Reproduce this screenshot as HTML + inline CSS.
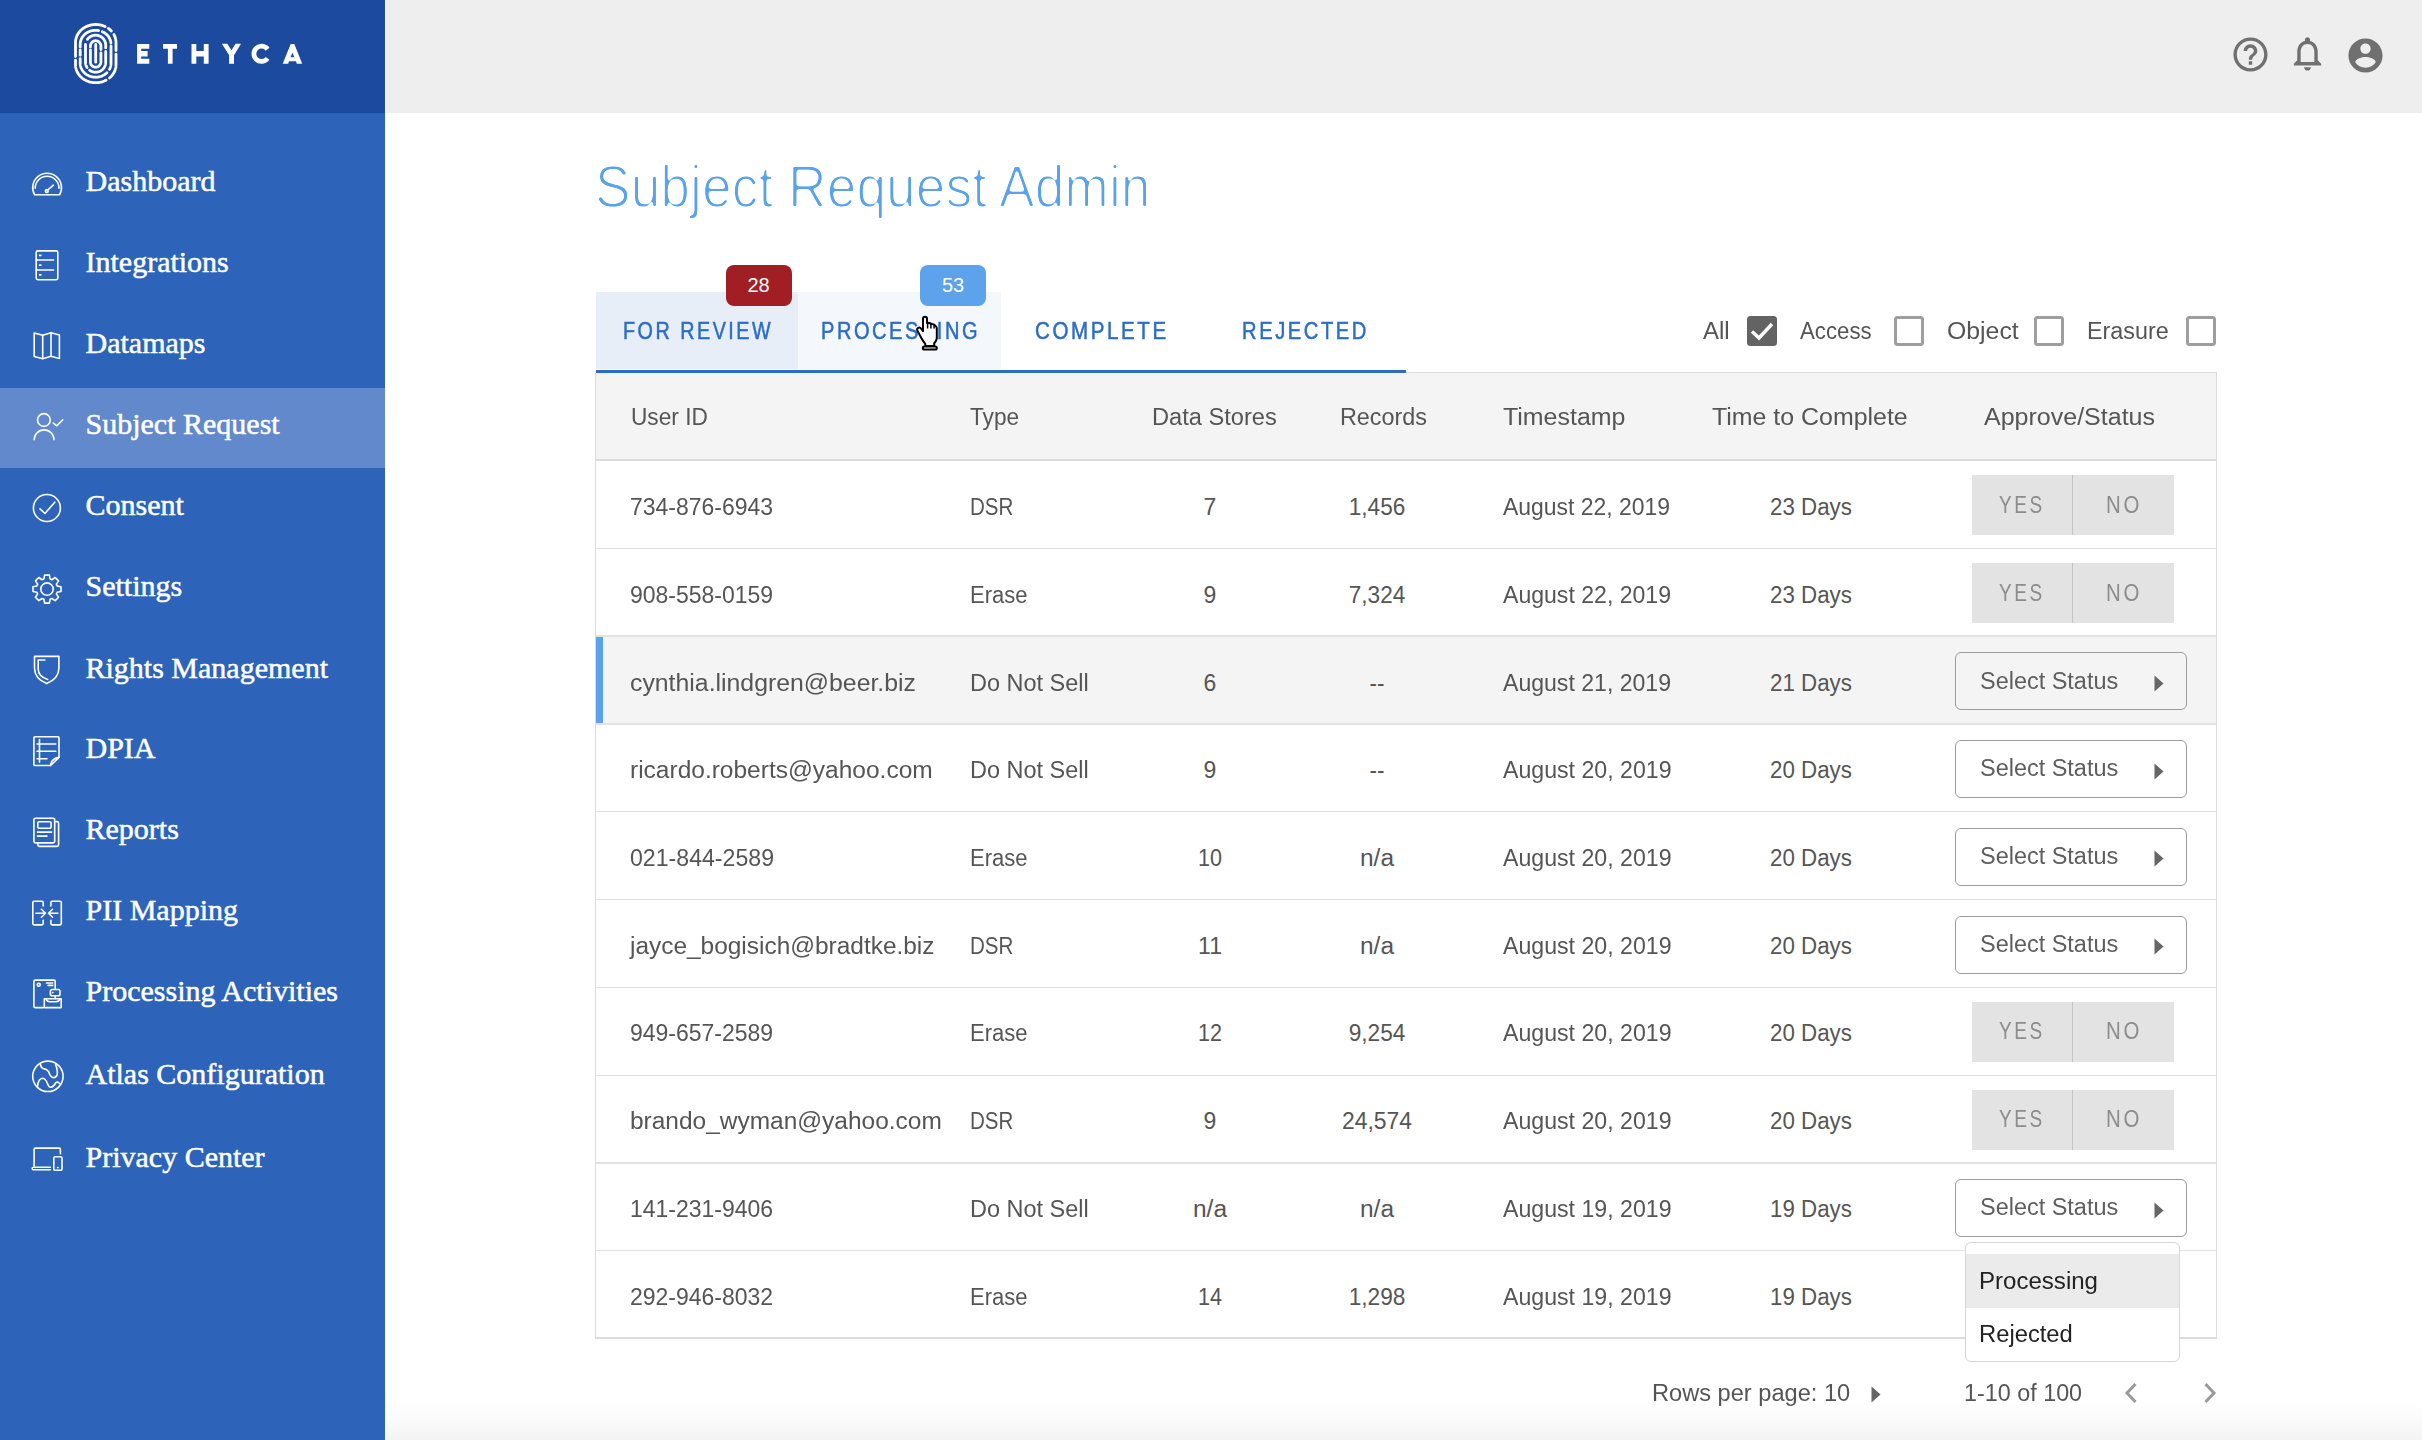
<!DOCTYPE html><html><head><meta charset="utf-8"><style>
*{margin:0;padding:0;box-sizing:border-box}
html,body{width:2422px;height:1440px;overflow:hidden;background:#fff;font-family:"Liberation Sans", sans-serif}
.t{position:absolute;white-space:nowrap;line-height:1;transform-origin:0 50%}
</style></head><body><svg width="0" height="0" style="position:absolute"><filter id="thin" x="-5%" y="-20%" width="110%" height="140%"><feGaussianBlur stdDeviation="1.1"/><feComponentTransfer><feFuncA type="linear" slope="5" intercept="-3.4"/></feComponentTransfer></filter></svg>
<div style="position:absolute;left:0;top:0;width:385px;height:1440px;background:#2D64BA"></div>
<div style="position:absolute;left:0;top:0;width:385px;height:113px;background:#1C4A9F"></div>
<div style="position:absolute;left:0;top:388px;width:385px;height:79.5px;background:#6189CC"></div>
<div style="position:absolute;left:386px;top:0;width:2036px;height:113px;background:#EEEEEE"></div>
<div style="position:absolute;left:386px;top:1398px;width:2036px;height:42px;background:linear-gradient(#fff,#FBFBFB 50%,#F3F3F3)"></div>
<svg style="position:absolute;left:0;top:0" width="130" height="95" viewBox="0 0 130 95" fill="none" stroke="#fff" stroke-width="2.8" stroke-linecap="round"><path d="M75.50 56.49 L75.50 55.60 L75.50 54.71 L75.50 53.82 L75.50 52.93 L75.50 52.05 L75.50 51.16 L75.50 50.27 L75.50 49.38 L75.50 48.49 L75.50 47.61 L75.50 46.72 L75.50 45.83 L75.50 44.94 L75.50 44.05 L75.50 43.17 L75.50 42.31 L75.53 41.56 L75.59 40.81 L75.69 40.06 L75.82 39.31 L75.99 38.57 L76.19 37.84 L76.43 37.12 L76.70 36.40 L77.00 35.70 L77.34 35.01 L77.71 34.33 L78.11 33.66 L78.54 33.01 L79.00 32.38 L79.49 31.77 L80.01 31.17 L80.56 30.60 L81.13 30.04 L81.73 29.51 L82.36 29.00 L83.01 28.51 L83.68 28.05 L84.37 27.61 L85.08 27.20 L85.81 26.82 L86.56 26.46 L87.32 26.13 L88.10 25.83 L88.89 25.56 L89.69 25.32 L90.51 25.11 L91.33 24.93 L92.16 24.78 L93.00 24.67 L93.84 24.58 L94.69 24.52 L95.54 24.50 L96.39 24.51 L97.23 24.55 L98.08 24.62 L98.92 24.72 L99.75 24.86 L100.58 25.02 L101.40 25.21 L102.21 25.44 L103.01 25.70 L103.79 25.98 L104.56 26.29 L105.13 26.55"/><path d="M108.33 28.39 L108.98 28.87 L109.61 29.38 L110.22 29.91 L110.80 30.46 L111.35 31.03 L111.35 31.03"/><path d="M113.89 34.50 L114.25 35.18 L114.58 35.87 L114.87 36.58 L115.14 37.30 L115.36 38.02 L115.56 38.76 L115.72 39.50 L115.84 40.24 L115.93 40.99 L115.98 41.75 L116.00 42.50 L116.00 43.39 L116.00 44.28 L116.00 45.16 L116.00 46.05 L116.00 46.94 L116.00 47.83 L116.00 48.72 L116.00 49.60 L116.00 50.49 L116.00 50.49"/><path d="M116.00 54.04 L116.00 54.93 L116.00 55.82 L116.00 56.71 L116.00 57.60 L116.00 58.48 L116.00 59.37 L116.00 60.26 L116.00 61.15 L116.00 62.04 L116.00 62.92 L116.00 63.81 L116.00 64.70 L115.98 65.45 L115.93 66.21 L115.84 66.96 L115.72 67.70 L115.56 68.44 L115.36 69.18 L115.14 69.90 L114.87 70.62 L114.58 71.33 L114.25 72.02 L113.89 72.70 L113.50 73.37 L113.07 74.02 L112.62 74.66 L112.13 75.28 L111.62 75.88 L111.08 76.46 L110.51 77.02 L109.92 77.56 L109.46 77.95"/><path d="M75.50 60.26 L75.50 61.15 L75.50 62.04 L75.50 62.92 L75.50 63.81 L75.50 64.70 L75.52 65.45 L75.57 66.21 L75.66 66.96 L75.78 67.70 L75.94 68.44 L76.14 69.18 L76.36 69.90 L76.63 70.62 L76.92 71.33 L77.25 72.02 L77.61 72.70 L78.00 73.37 L78.43 74.02 L78.88 74.66 L79.37 75.28 L79.88 75.88 L80.42 76.46 L80.99 77.02 L81.58 77.56 L82.20 78.08 L82.84 78.57 L83.51 79.04 L84.19 79.48 L84.90 79.90 L85.62 80.29 L86.37 80.65 L87.13 80.99 L87.90 81.29 L88.69 81.57 L89.49 81.82 L90.30 82.04 L91.13 82.22 L91.96 82.38 L92.79 82.51 L93.63 82.60 L94.48 82.66 L95.33 82.70 L96.17 82.70 L97.02 82.66 L97.87 82.60 L98.71 82.51 L99.54 82.38 L100.37 82.22 L101.20 82.04 L102.01 81.82 L102.81 81.57 L103.60 81.29 L104.37 80.99 L105.13 80.65 L105.88 80.29 L106.06 80.19"/><path d="M80.20 46.95 L80.20 46.19 L80.20 45.43 L80.20 44.68 L80.20 44.01 L80.23 43.42 L80.28 42.84 L80.37 42.25 L80.47 41.68 L80.61 41.10 L80.77 40.54 L80.95 39.97 L81.17 39.42 L81.40 38.87 L81.67 38.34 L81.95 37.81 L82.26 37.30 L82.60 36.80 L82.95 36.31 L83.33 35.84 L83.73 35.38 L84.16 34.93 L84.60 34.50 L85.06 34.09 L85.54 33.70 L86.03 33.33 L86.55 32.97 L87.08 32.64 L87.62 32.32 L88.18 32.03 L88.75 31.76 L89.34 31.51 L89.93 31.28 L90.54 31.08 L91.15 30.90 L91.77 30.74 L92.40 30.61 L93.03 30.50 L93.67 30.41 L94.31 30.35 L94.96 30.31 L95.60 30.30 L96.24 30.31 L96.89 30.35 L97.53 30.41 L98.17 30.50 L98.64 30.58"/><path d="M102.30 31.70 L102.88 31.96 L103.44 32.25 L103.99 32.56 L104.52 32.89 L105.04 33.24 L105.54 33.61 L106.02 33.99 L106.49 34.40 L106.94 34.82 L107.36 35.26 L107.77 35.72 L108.15 36.19 L108.52 36.68 L108.86 37.17 L109.17 37.68 L109.46 38.21 L109.73 38.74 L109.98 39.28 L110.20 39.83 L110.39 40.39 L110.56 40.96 L110.70 41.53 L110.81 42.11 L110.90 42.69 L110.93 42.98"/><path d="M111.00 45.81 L111.00 46.57 L111.00 47.32 L111.00 48.08 L111.00 48.84 L111.00 49.59 L111.00 50.35 L111.00 51.10 L111.00 51.86 L111.00 52.62 L111.00 53.37 L111.00 54.13 L111.00 54.88 L111.00 55.64 L111.00 56.40 L111.00 57.15 L111.00 57.91 L111.00 58.66 L111.00 59.42 L111.00 60.18 L111.00 60.93 L111.00 61.69 L111.00 62.44 L111.00 63.20 L110.99 63.79 L110.95 64.37 L110.88 64.95 L110.78 65.53 L110.66 66.11 L110.52 66.68 L110.34 67.25 L110.14 67.80 L109.92 68.35 L109.67 68.89 L109.46 69.29"/><path d="M80.20 49.78 L80.20 50.54 L80.20 51.29 L80.20 52.05 L80.20 52.81 L80.20 53.56 L80.20 54.32 L80.20 55.07 L80.20 55.26"/><path d="M80.20 58.66 L80.20 59.42 L80.20 60.18 L80.20 60.93 L80.20 61.69 L80.20 62.44 L80.20 63.20 L80.21 63.79 L80.25 64.37 L80.32 64.95 L80.42 65.53 L80.54 66.11 L80.68 66.68 L80.86 67.25 L81.06 67.80 L81.28 68.35 L81.53 68.89 L81.81 69.42 L82.10 69.94 L82.43 70.45 L82.77 70.95 L83.14 71.43 L83.53 71.90 L83.94 72.35 L84.37 72.78 L84.83 73.20 L85.30 73.60 L85.78 73.99 L86.29 74.35 L86.81 74.70 L87.35 75.02 L87.90 75.32 L88.47 75.61 L89.04 75.87 L89.63 76.11 L90.23 76.32 L90.84 76.51 L91.46 76.68 L92.08 76.83 L92.71 76.95 L93.35 77.05 L93.99 77.12 L94.63 77.17 L95.28 77.20 L95.92 77.20 L96.57 77.17 L97.21 77.12 L97.85 77.05 L98.49 76.95 L99.12 76.83 L99.74 76.68 L100.36 76.51 L100.97 76.32 L101.57 76.11 L102.16 75.87 L102.73 75.61 L103.30 75.32 L103.85 75.02 L104.39 74.70 L104.91 74.35 L105.42 73.99 L105.90 73.60 L106.37 73.20 L106.83 72.78 L106.94 72.68"/><path d="M87.43 39.32 L87.68 38.99 L87.95 38.67 L88.24 38.35 L88.53 38.06 L88.84 37.77 L89.16 37.49 L89.49 37.23 L89.84 36.99 L90.19 36.76 L90.55 36.54 L90.92 36.34 L91.30 36.15 L91.69 35.98 L92.08 35.83 L92.48 35.69 L92.88 35.57 L93.29 35.46 L93.71 35.38 L94.12 35.31 L94.54 35.25 L94.97 35.22 L95.39 35.20 L95.81 35.20 L96.23 35.22 L96.66 35.25 L97.08 35.31 L97.49 35.38 L97.91 35.46 L98.32 35.57 L98.72 35.69 L99.12 35.83 L99.51 35.98 L99.90 36.15 L100.28 36.34 L100.65 36.54 L101.01 36.76 L101.36 36.99 L101.71 37.23 L102.04 37.49 L102.36 37.77 L102.67 38.06 L102.96 38.35 L103.25 38.67 L103.52 38.99 L103.77 39.32 L104.01 39.67 L104.24 40.02 L104.45 40.38 L104.65 40.75 L104.83 41.13 L104.99 41.52 L105.14 41.91 L105.27 42.31 L105.38 42.71 L105.48 43.12 L105.56 43.53 L105.62 43.95 L105.66 44.36 L105.69 44.78 L105.70 45.20 L105.70 45.88 L105.70 46.56 L105.70 47.24 L105.70 47.92 L105.70 47.92"/><path d="M85.53 44.47 L85.50 44.89 L85.50 45.37 L85.50 46.05 L85.50 46.73 L85.50 47.41 L85.50 48.09 L85.50 48.77 L85.50 49.45 L85.50 50.13 L85.50 50.81 L85.50 51.49 L85.50 52.17 L85.50 52.85 L85.50 53.53 L85.50 54.21 L85.50 54.89 L85.50 55.57 L85.50 56.25 L85.50 56.93 L85.50 57.61 L85.50 58.29 L85.50 58.97 L85.50 59.65 L85.50 60.33 L85.50 61.01 L85.50 61.69 L85.50 62.30 L85.51 62.72 L85.54 63.14 L85.59 63.56 L85.66 63.97 L85.74 64.38 L85.84 64.79 L85.96 65.19 L86.10 65.59 L86.25 65.98 L86.42 66.36 L86.60 66.74 L86.80 67.11 L87.02 67.47 L87.07 67.56"/><path d="M105.70 51.49 L105.70 52.17 L105.70 52.85 L105.70 53.53 L105.70 54.21 L105.70 54.89 L105.70 55.57 L105.70 56.25 L105.70 56.93 L105.70 57.61 L105.70 58.29 L105.70 58.97 L105.70 59.65 L105.70 60.33 L105.70 61.01 L105.70 61.69 L105.70 62.30 L105.69 62.72 L105.66 63.14 L105.61 63.56 L105.54 63.97 L105.46 64.38 L105.36 64.79 L105.24 65.19 L105.10 65.59 L104.95 65.98 L104.78 66.36 L104.60 66.74 L104.40 67.11 L104.18 67.47 L103.95 67.82 L103.71 68.16 L103.45 68.49 L103.18 68.81 L102.89 69.12 L102.59 69.42 L102.28 69.70 L101.96 69.97 L101.62 70.23 L101.28 70.47 L100.92 70.70 L100.56 70.91 L100.19 71.11 L99.80 71.29 L99.42 71.46 L99.02 71.61 L98.62 71.74 L98.21 71.86 L97.80 71.96 L97.39 72.04 L96.97 72.11 L96.55 72.16 L96.13 72.19 L95.71 72.20 L95.28 72.20 L94.86 72.17 L94.44 72.13 L94.02 72.08 L93.60 72.00 L93.19 71.91 L92.78 71.80 L92.38 71.68 L91.98 71.54 L91.59 71.38 L91.20 71.20 L90.83 71.01 L90.46 70.81 L90.10 70.59 L89.75 70.35 L89.58 70.23"/><path d="M90.40 46.97 L90.40 46.34 L90.40 45.91 L90.41 45.69 L90.43 45.47 L90.46 45.25 L90.49 45.04 L90.54 44.82 L90.59 44.61 L90.66 44.40 L90.73 44.19 L90.81 43.99 L90.90 43.78 L91.00 43.59 L91.10 43.39 L91.22 43.21 L91.34 43.02 L91.47 42.85 L91.60 42.67 L91.75 42.51 L91.90 42.35 L92.06 42.19 L92.22 42.05 L92.39 41.91 L92.56 41.77 L92.74 41.65 L92.93 41.53 L93.12 41.42 L93.32 41.32 L93.51 41.22 L93.72 41.14 L93.92 41.06 L94.13 40.99 L94.34 40.93 L94.56 40.88 L94.77 40.84 L94.99 40.81 L95.21 40.79 L95.43 40.77 L95.65 40.77 L95.87 40.77 L96.09 40.79 L96.31 40.81 L96.53 40.84 L96.74 40.88 L96.96 40.93 L97.17 40.99 L97.38 41.06 L97.58 41.14 L97.79 41.22 L97.98 41.32 L98.18 41.42 L98.37 41.53 L98.56 41.65 L98.74 41.77 L98.91 41.91 L99.08 42.05 L99.24 42.19 L99.40 42.35 L99.55 42.51 L99.70 42.67 L99.83 42.85 L99.96 43.02 L100.08 43.21 L100.20 43.39 L100.30 43.59 L100.40 43.78 L100.49 43.99 L100.57 44.19 L100.64 44.40 L100.71 44.61 L100.76 44.82 L100.81 45.04 L100.84 45.25 L100.87 45.47 L100.89 45.69 L100.90 45.91 L100.90 46.34 L100.90 46.97 L100.90 47.61 L100.90 48.25 L100.90 48.88 L100.90 49.52 L100.90 49.52"/><path d="M100.90 52.86 L100.90 53.49 L100.90 54.13 L100.90 54.76 L100.90 55.40 L100.90 56.04 L100.90 56.67 L100.90 57.31 L100.90 57.94 L100.90 58.58 L100.90 59.22 L100.90 59.85 L100.90 60.49 L100.90 61.12 L100.90 61.76 L100.90 62.08 L100.89 62.30 L100.87 62.52 L100.84 62.74 L100.80 62.96 L100.75 63.17 L100.69 63.38 L100.63 63.59 L100.55 63.80 L100.47 64.01 L100.38 64.20 L100.28 64.40 L100.17 64.59 L100.05 64.78 L99.93 64.96 L99.80 65.14 L99.66 65.31 L99.51 65.47 L99.36 65.63 L99.20 65.78 L99.04 65.93 L98.87 66.07 L98.69 66.20 L98.51 66.32 L98.32 66.44 L98.13 66.55 L97.93 66.65 L97.74 66.74 L97.53 66.82 L97.32 66.90 L97.11 66.96 L96.90 67.02 L96.69 67.07 L96.47 67.11 L96.25 67.14 L96.03 67.16 L95.81 67.17 L95.60 67.17 L95.38 67.16 L95.16 67.15 L94.94 67.12 L94.72 67.09 L94.50 67.04 L94.29 66.99 L94.08 66.93 L93.87 66.86 L93.67 66.78 L93.46 66.69 L93.27 66.60 L93.07 66.49 L92.88 66.38 L92.70 66.26 L92.52 66.13 L92.35 66.00 L92.18 65.86 L92.02 65.71 L91.86 65.55 L91.71 65.39 L91.57 65.22 L91.44 65.05 L91.31 64.87 L91.19 64.69 L91.08 64.50 L90.97 64.30 L90.88 64.11 L90.79 63.90 L90.71 63.70 L90.64 63.49 L90.58 63.28 L90.53 63.07 L90.48 62.85 L90.45 62.63 L90.42 62.41 L90.41 62.19 L90.40 61.97 L90.40 61.44 L90.40 60.81 L90.40 60.17 L90.40 59.54 L90.40 58.90 L90.40 58.26 L90.40 57.63 L90.40 56.99 L90.40 56.36 L90.40 55.72 L90.40 55.08 L90.40 54.45 L90.40 53.81 L90.40 53.18 L90.40 52.54 L90.40 51.90 L90.40 51.27 L90.40 50.63 L90.40 50.00 L90.40 49.84"/><path d="M95.7 44.5 L95.7 62.2"/></svg>
<svg style="position:absolute;left:0;top:0" width="320" height="95" viewBox="0 0 320 95" fill="#fff"><path d="M137.1 43.9 H149.3 V48.7 H141.2 V51.1 H147.6 V56.5 H141.2 V58.8 H149.3 V63.65 H137.1 Z"/><path d="M163.1 43.9 H177 V48.7 H172.6 V63.65 H167.9 V48.7 H163.1 Z"/><path d="M191.5 43.9 H196.3 V51 H203.8 V43.9 H208.6 V63.65 H203.8 V56.6 H196.3 V63.65 H191.5 Z"/><path d="M221.9 43.8 H227.3 L231.5 50.3 L235.6 43.8 H241 L234 55.2 V63.65 H229.1 V55.2 Z"/><path fill-rule="evenodd" d="M290.7 43.9 H294.3 L302.2 63.65 H296.8 L296 61.2 H289 L288.2 63.65 H282.7 Z M292.4 52.8 L294.4 57.2 H290.5 Z"/><path d="M267.57 49.23 A7.60 7.60 0 1 0 267.57 58.37" fill="none" stroke="#fff" stroke-width="4.8"/></svg>
<svg style="position:absolute;left:0;top:0" width="385" height="1440" viewBox="0 0 385 1440" fill="none" stroke="#fff" stroke-width="1.6" stroke-linecap="round" stroke-linejoin="round"><path d="M34.63 194.80 A14.40 14.40 0 1 1 59.57 194.80 Z"/><path d="M35.2 188.2 A11.9 11.9 0 0 1 59 188.2"/><path d="M47.8 190 L53.3 185.2"/><circle cx="46.8" cy="191" r="1.4"/><rect x="36.2" y="250.9" width="21.6" height="28.8" rx="1.6"/><path d="M36.2 260 H53.6 M36.2 270 H53.6"/><path d="M39.6 255.3 H40.8 M39.6 265.2 H40.8 M39.6 274.8 H40.8" stroke-width="1.8"/><path d="M34.2 333 L42.7 335.3 L51 332.8 L59.4 335 V358.5 L51 356.3 L42.7 358.8 L34.2 356.5 Z"/><path d="M42.7 335.3 V358.8 M51 332.8 V356.3"/><circle cx="43.9" cy="420" r="6.4"/><path d="M34.2 439.8 A9.9 9.9 0 0 1 54 439.8"/><path d="M53.3 423 L56.8 425.8 L62.8 419.8"/><circle cx="46.9" cy="508" r="13.5"/><path d="M40 508.8 L44.9 513.5 L54.8 502.2"/><path d="M43.87 578.97 L44.60 575.10 L49.40 575.10 L50.13 578.97 L51.95 579.72 L55.20 577.51 L58.59 580.90 L56.38 584.15 L57.13 585.97 L61.00 586.70 L61.00 591.50 L57.13 592.23 L56.38 594.05 L58.59 597.30 L55.20 600.69 L51.95 598.48 L50.13 599.23 L49.40 603.10 L44.60 603.10 L43.87 599.23 L42.05 598.48 L38.80 600.69 L35.41 597.30 L37.62 594.05 L36.87 592.23 L33.00 591.50 L33.00 586.70 L36.87 585.97 L37.62 584.15 L35.41 580.90 L38.80 577.51 L42.05 579.72 Z"/><circle cx="47" cy="589.1" r="6.2"/><path d="M34.5 656.4 H58.9 V668 Q58.9 678.5 46.7 683.6 Q34.5 678.5 34.5 668 Z"/><path d="M44.9 660 H38.2 V669 Q38.2 676.5 47.7 679.4"/><path d="M35 736.8 H57.9 Q59 736.8 59 738 V757.4 L50.6 765.5 H35 Q33.9 765.5 33.9 764.4 V738 Q33.9 736.8 35 736.8 Z"/><path d="M50.6 765.5 Q51.2 758.5 59 757.4"/><path d="M37.1 744 H55.8 M37.1 751.3 H55.8 M37.1 758.7 H47 M39.5 739.6 V762.3"/><rect x="33.9" y="818.2" width="20.8" height="24.7" rx="1.6"/><path d="M55.4 821.6 H57 Q58.6 821.6 58.6 823.2 V844.8 Q58.6 846.4 57 846.4 H39.5 Q37.9 846.4 37.9 844.8 V843.6"/><rect x="37.8" y="821.7" width="13.3" height="6.6" rx="1.2"/><path d="M37.4 832.1 H51.6 M37.4 836.1 H47"/><path d="M43.2 906 V902.6 Q43.2 901.3 41.9 901.3 H34.1 Q32.8 901.3 32.8 902.6 V923.6 Q32.8 924.9 34.1 924.9 H41.9 Q43.2 924.9 43.2 923.6 V920.2"/><path d="M50.9 906 V902.6 Q50.9 901.3 52.2 901.3 H60 Q61.3 901.3 61.3 902.6 V923.6 Q61.3 924.9 60 924.9 H52.2 Q50.9 924.9 50.9 923.6 V920.2"/><path d="M36 913.2 H45.4 M41.4 909.3 L45.4 913.2 L41.4 917.2 M57.9 913.2 H48.5 M52.5 909.3 L48.5 913.2 L52.5 917.2"/><path d="M43.4 1007.6 H35.3 Q33.9 1007.6 33.9 1006.2 V981.5 Q33.9 980.1 35.3 980.1 H53.8 Q55.2 980.1 55.2 981.5 V988.6"/><circle cx="38.7" cy="984.7" r="1.5"/><path d="M46.4 983 H52.7 M48.1 985.4 H52.7"/><rect x="50.4" y="989.5" width="9.6" height="6.2" rx="1.8"/><path d="M52.6 992.6 H52.9 M55.2 995.8 V998.6"/><path d="M44.3 998.8 H61.2 V1007.6 H44.3 Z"/><path d="M45.8 998.8 Q47 1001.8 50 1001.8 H56 Q59 1001.8 60 998.8"/><circle cx="47.9" cy="1076.35" r="15.2"/><path d="M40.4 1063.4 Q40.6 1068 43.5 1068.6 Q46.5 1068.8 48.6 1071.5 Q50.5 1077.8 54 1077.6 Q57.5 1077 57.4 1072 Q57.2 1068 55.6 1064.6"/><path d="M37.4 1086.6 Q38.4 1078.5 42.6 1078.3 Q45.2 1078.3 47 1082.5 Q48.8 1087.6 51 1087.3 Q53.4 1087 55.6 1083 Q57.2 1081 59.7 1083.6"/><path d="M34.1 1166 V1149.5 Q34.1 1148.1 35.5 1148.1 H59 Q60.4 1148.1 60.4 1149.5 V1153.8"/><path d="M50.4 1167.2 H33.4 Q32.2 1167.2 32.2 1168.5 Q32.2 1169.8 33.4 1169.8 H50.4"/><rect x="53.8" y="1156.8" width="8.2" height="13.5" rx="1.4"/><path d="M57.6 1167.6 H58"/></svg>

<svg style="position:absolute;left:2229.5px;top:33.5px" width="41" height="41" viewBox="0 0 24 24" fill="#707070"><path d="M11 18h2v-2h-2v2zm1-16C6.48 2 2 6.48 2 12s4.48 10 10 10 10-4.48 10-10S17.52 2 12 2zm0 18c-4.41 0-8-3.59-8-8s3.59-8 8-8 8 3.59 8 8-3.59 8-8 8zm0-14c-2.21 0-4 1.79-4 4h2c0-1.1.9-2 2-2s2 .9 2 2c0 2-3 1.75-3 5h2c0-2.25 3-2.5 3-5 0-2.21-1.79-4-4-4z"/></svg>
<svg style="position:absolute;left:2287px;top:33.2px" width="41" height="41" viewBox="0 0 24 24" fill="#707070"><path d="M12 22c1.1 0 2-.9 2-2h-4c0 1.1.89 2 2 2zm6-6v-5c0-3.07-1.64-5.64-4.5-6.32V4c0-.83-.67-1.5-1.5-1.5s-1.5.67-1.5 1.5v.68C7.63 5.36 6 7.92 6 11v5l-2 2v1h16v-1l-2-2zm-2 1H8v-6c0-2.48 1.51-4.5 4-4.5s4 2.02 4 4.5v6z"/></svg>
<svg style="position:absolute;left:2344.5px;top:35px" width="41" height="41" viewBox="0 0 24 24" fill="#707070"><path d="M12 2C6.48 2 2 6.48 2 12s4.48 10 10 10 10-4.48 10-10S17.52 2 12 2zm0 3c1.66 0 3 1.34 3 3s-1.34 3-3 3-3-1.34-3-3 1.34-3 3-3zm0 14.2c-2.5 0-4.71-1.28-6-3.22.03-1.99 4-3.08 6-3.08 1.99 0 5.97 1.09 6 3.08-1.29 1.94-3.5 3.22-6 3.22z"/></svg>

<div style="position:absolute;left:596px;top:292px;width:202px;height:77px;background:#E7EEF8"></div>
<div style="position:absolute;left:798px;top:292px;width:203px;height:77px;background:#F4F7FC"></div>
<div style="position:absolute;left:596px;top:370px;width:810px;height:3px;background:#2A6CC6"></div>
<div style="position:absolute;left:726px;top:265px;width:65.5px;height:40.5px;background:#A21E25;border-radius:8px"></div>
<div style="position:absolute;left:920px;top:265px;width:65.5px;height:40.5px;background:#5CA3EC;border-radius:8px"></div>
<div style="position:absolute;left:1747px;top:316px;width:30px;height:30px;background:#636363;border-radius:3.5px"></div>
<svg style="position:absolute;left:1747px;top:316px" width="30" height="30" viewBox="0 0 30 30"><path d="M5 15.5 L12 22 L25 8" fill="none" stroke="#fff" stroke-width="3.4"/></svg>
<div style="position:absolute;left:1894px;top:316px;width:30px;height:30px;border:3px solid #9E9E9E;border-radius:3.5px"></div>
<div style="position:absolute;left:2034px;top:316px;width:30px;height:30px;border:3px solid #9E9E9E;border-radius:3.5px"></div>
<div style="position:absolute;left:2186px;top:316px;width:30px;height:30px;border:3px solid #9E9E9E;border-radius:3.5px"></div>
<div style="position:absolute;left:1406px;top:372px;width:811px;height:1px;background:#DCDCDC"></div>
<div style="position:absolute;left:595px;top:373px;width:1622px;height:966px;border:1.2px solid #DCDCDC;border-top:none;border-bottom:2px solid #DCDCDC"></div>
<div style="position:absolute;left:596px;top:373px;width:1620px;height:86.5px;background:#F4F4F4"></div>
<div style="position:absolute;left:596px;top:459px;width:1620px;height:2px;background:#DCDCDC"></div>
<div style="position:absolute;left:596px;top:636px;width:1620px;height:87px;background:#F4F4F4"></div><div style="position:absolute;left:596px;top:635.5px;width:7px;height:88px;background:#5AA2EB"></div>
<div style="position:absolute;left:596px;top:547.5px;width:1620px;height:1.5px;background:#E2E2E2"></div>
<div style="position:absolute;left:596px;top:635.0px;width:1620px;height:1.5px;background:#E2E2E2"></div>
<div style="position:absolute;left:596px;top:723.0px;width:1620px;height:1.5px;background:#E2E2E2"></div>
<div style="position:absolute;left:596px;top:810.5px;width:1620px;height:1.5px;background:#E2E2E2"></div>
<div style="position:absolute;left:596px;top:898.5px;width:1620px;height:1.5px;background:#E2E2E2"></div>
<div style="position:absolute;left:596px;top:986.5px;width:1620px;height:1.5px;background:#E2E2E2"></div>
<div style="position:absolute;left:596px;top:1074.5px;width:1620px;height:1.5px;background:#E2E2E2"></div>
<div style="position:absolute;left:596px;top:1162.0px;width:1620px;height:1.5px;background:#E2E2E2"></div>
<div style="position:absolute;left:596px;top:1249.5px;width:1620px;height:1.5px;background:#E2E2E2"></div>
<div style="position:absolute;left:1971.5px;top:474.5px;width:202px;height:60px;background:#E3E3E3"></div><div style="position:absolute;left:2072px;top:474.5px;width:1.2px;height:60px;background:#C4C4C4"></div>
<div style="position:absolute;left:1971.5px;top:562.5px;width:202px;height:60px;background:#E3E3E3"></div><div style="position:absolute;left:2072px;top:562.5px;width:1.2px;height:60px;background:#C4C4C4"></div>
<div style="position:absolute;left:1955px;top:652.0px;width:232px;height:58px;border:1.8px solid #9C9C9C;border-radius:6px"></div>
<svg style="position:absolute;left:2154px;top:674.5px" width="10" height="17" viewBox="0 0 10 17"><path d="M0.5 0.5 L9.5 8.5 L0.5 16.5 Z" fill="#666"/></svg>
<div style="position:absolute;left:1955px;top:740.0px;width:232px;height:58px;border:1.8px solid #9C9C9C;border-radius:6px"></div>
<svg style="position:absolute;left:2154px;top:762.5px" width="10" height="17" viewBox="0 0 10 17"><path d="M0.5 0.5 L9.5 8.5 L0.5 16.5 Z" fill="#666"/></svg>
<div style="position:absolute;left:1955px;top:827.5px;width:232px;height:58px;border:1.8px solid #9C9C9C;border-radius:6px"></div>
<svg style="position:absolute;left:2154px;top:850.0px" width="10" height="17" viewBox="0 0 10 17"><path d="M0.5 0.5 L9.5 8.5 L0.5 16.5 Z" fill="#666"/></svg>
<div style="position:absolute;left:1955px;top:915.5px;width:232px;height:58px;border:1.8px solid #9C9C9C;border-radius:6px"></div>
<svg style="position:absolute;left:2154px;top:938.0px" width="10" height="17" viewBox="0 0 10 17"><path d="M0.5 0.5 L9.5 8.5 L0.5 16.5 Z" fill="#666"/></svg>
<div style="position:absolute;left:1971.5px;top:1001.5px;width:202px;height:60px;background:#E3E3E3"></div><div style="position:absolute;left:2072px;top:1001.5px;width:1.2px;height:60px;background:#C4C4C4"></div>
<div style="position:absolute;left:1971.5px;top:1089.5px;width:202px;height:60px;background:#E3E3E3"></div><div style="position:absolute;left:2072px;top:1089.5px;width:1.2px;height:60px;background:#C4C4C4"></div>
<div style="position:absolute;left:1955px;top:1179.0px;width:232px;height:58px;border:1.8px solid #9C9C9C;border-radius:6px"></div>
<svg style="position:absolute;left:2154px;top:1201.5px" width="10" height="17" viewBox="0 0 10 17"><path d="M0.5 0.5 L9.5 8.5 L0.5 16.5 Z" fill="#666"/></svg>
<div style="position:absolute;left:1965px;top:1242px;width:215px;height:119.5px;background:#fff;border:1.5px solid #D6D6D6;border-radius:6px;overflow:hidden"><div style="position:absolute;left:0;top:11px;width:100%;height:54px;background:#EBEBEB"></div></div>
<svg style="position:absolute;left:1870.5px;top:1385.5px" width="10" height="17" viewBox="0 0 10 17"><path d="M0.5 0.5 L9.5 8.5 L0.5 16.5 Z" fill="#666"/></svg>
<svg style="position:absolute;left:2122px;top:1382px" width="18" height="22" viewBox="0 0 18 22"><path d="M13.5 2 L5 11 L13.5 20" fill="none" stroke="#9A9A9A" stroke-width="3"/></svg>
<svg style="position:absolute;left:2201px;top:1382px" width="18" height="22" viewBox="0 0 18 22"><path d="M4.5 2 L13 11 L4.5 20" fill="none" stroke="#9A9A9A" stroke-width="3"/></svg>
<div class="t" id="nav0" style="left:85.50px;top:165.82px;font-size:30.00px;color:#fff;transform:scaleX(1.0000);font-family:'Liberation Serif', serif;-webkit-text-stroke:0.5px #fff;">Dashboard</div>
<div class="t" id="nav1" style="left:85.50px;top:246.82px;font-size:30.00px;color:#fff;transform:scaleX(1.0000);font-family:'Liberation Serif', serif;-webkit-text-stroke:0.5px #fff;">Integrations</div>
<div class="t" id="nav2" style="left:85.50px;top:327.82px;font-size:30.00px;color:#fff;transform:scaleX(1.0000);font-family:'Liberation Serif', serif;-webkit-text-stroke:0.5px #fff;">Datamaps</div>
<div class="t" id="nav3" style="left:85.50px;top:408.75px;font-size:30.00px;color:#fff;transform:scaleX(1.0000);font-family:'Liberation Serif', serif;-webkit-text-stroke:0.5px #fff;">Subject Request</div>
<div class="t" id="nav4" style="left:85.50px;top:490.00px;font-size:30.00px;color:#fff;transform:scaleX(1.0000);font-family:'Liberation Serif', serif;-webkit-text-stroke:0.5px #fff;">Consent</div>
<div class="t" id="nav5" style="left:85.50px;top:571.25px;font-size:30.00px;color:#fff;transform:scaleX(1.0000);font-family:'Liberation Serif', serif;-webkit-text-stroke:0.5px #fff;">Settings</div>
<div class="t" id="nav6" style="left:85.50px;top:652.50px;font-size:30.00px;color:#fff;transform:scaleX(1.0000);font-family:'Liberation Serif', serif;-webkit-text-stroke:0.5px #fff;">Rights Management</div>
<div class="t" id="nav7" style="left:85.50px;top:733.00px;font-size:30.00px;color:#fff;transform:scaleX(1.0000);font-family:'Liberation Serif', serif;-webkit-text-stroke:0.5px #fff;">DPIA</div>
<div class="t" id="nav8" style="left:85.50px;top:813.90px;font-size:30.00px;color:#fff;transform:scaleX(1.0000);font-family:'Liberation Serif', serif;-webkit-text-stroke:0.5px #fff;">Reports</div>
<div class="t" id="nav9" style="left:85.50px;top:895.00px;font-size:30.00px;color:#fff;transform:scaleX(1.0000);font-family:'Liberation Serif', serif;-webkit-text-stroke:0.5px #fff;">PII Mapping</div>
<div class="t" id="nav10" style="left:85.50px;top:975.82px;font-size:30.00px;color:#fff;transform:scaleX(1.0000);font-family:'Liberation Serif', serif;-webkit-text-stroke:0.5px #fff;">Processing Activities</div>
<div class="t" id="nav11" style="left:85.50px;top:1058.72px;font-size:30.00px;color:#fff;transform:scaleX(1.0000);font-family:'Liberation Serif', serif;-webkit-text-stroke:0.5px #fff;">Atlas Configuration</div>
<div class="t" id="nav12" style="left:85.50px;top:1141.72px;font-size:30.00px;color:#fff;transform:scaleX(1.0000);font-family:'Liberation Serif', serif;-webkit-text-stroke:0.5px #fff;">Privacy Center</div>
<div class="t" id="title" style="left:595.00px;top:156.51px;font-size:60.00px;color:#5AA2EB;transform:scaleX(0.8906);filter:url(#thin);">Subject Request Admin</div>
<div class="t" id="tab0" style="left:622.70px;top:320.00px;font-size:23.50px;color:#2A6CC6;transform:scaleX(0.8394);letter-spacing:3.00px;-webkit-text-stroke:0.5px #2A6CC6;">FOR REVIEW</div>
<div class="t" id="tab1" style="left:820.50px;top:320.00px;font-size:23.50px;color:#2A6CC6;transform:scaleX(0.8519);letter-spacing:3.00px;-webkit-text-stroke:0.5px #2A6CC6;">PROCESSING</div>
<div class="t" id="tab2" style="left:1035.40px;top:320.00px;font-size:23.50px;color:#2A6CC6;transform:scaleX(0.8730);letter-spacing:3.00px;-webkit-text-stroke:0.5px #2A6CC6;">COMPLETE</div>
<div class="t" id="tab3" style="left:1242.00px;top:320.00px;font-size:23.50px;color:#2A6CC6;transform:scaleX(0.8577);letter-spacing:3.00px;-webkit-text-stroke:0.5px #2A6CC6;">REJECTED</div>
<div class="t" id="b28" style="left:747.50px;top:275.01px;font-size:20.00px;color:#fff;transform:scaleX(1.0000);">28</div>
<div class="t" id="b53" style="left:942.00px;top:275.01px;font-size:20.00px;color:#fff;transform:scaleX(1.0000);">53</div>
<div class="t" id="cAll" style="left:1703.00px;top:320.21px;font-size:23.30px;color:#555;transform:scaleX(1.0313);">All</div>
<div class="t" id="cAcc" style="left:1799.80px;top:320.21px;font-size:23.30px;color:#555;transform:scaleX(0.9535);">Access</div>
<div class="t" id="cObj" style="left:1947.00px;top:320.21px;font-size:23.30px;color:#555;transform:scaleX(1.0647);">Object</div>
<div class="t" id="cEra" style="left:2087.40px;top:320.21px;font-size:23.30px;color:#555;transform:scaleX(1.0003);">Erasure</div>
<div class="t" id="hUser" style="left:630.80px;top:406.21px;font-size:23.30px;color:#555;transform:scaleX(0.9725);">User ID</div>
<div class="t" id="hType" style="left:969.60px;top:406.21px;font-size:23.30px;color:#555;transform:scaleX(0.9725);">Type</div>
<div class="t" id="hDS" style="left:1152.40px;top:406.21px;font-size:23.30px;color:#555;transform:scaleX(1.0137);">Data Stores</div>
<div class="t" id="hRec" style="left:1339.50px;top:406.21px;font-size:23.30px;color:#555;transform:scaleX(1.0029);">Records</div>
<div class="t" id="hTS" style="left:1503.00px;top:406.21px;font-size:23.30px;color:#555;transform:scaleX(1.0703);">Timestamp</div>
<div class="t" id="hTTC" style="left:1712.30px;top:406.21px;font-size:23.30px;color:#555;transform:scaleX(1.0694);">Time to Complete</div>
<div class="t" id="hAS" style="left:1984.00px;top:406.21px;font-size:23.30px;color:#555;transform:scaleX(1.0735);">Approve/Status</div>
<div class="t" id="r0u" style="left:630.40px;top:496.11px;font-size:23.30px;color:#555;transform:scaleX(0.9863);">734-876-6943</div>
<div class="t" id="r0t" style="left:969.60px;top:496.11px;font-size:23.30px;color:#555;transform:scaleX(0.8823);">DSR</div>
<div class="t" id="r0d" style="left:1210.00px;top:496.11px;font-size:23.30px;color:#555;transform:translateX(-50%) scaleX(0.9863);transform-origin:50% 50%;">7</div>
<div class="t" id="r0r" style="left:1377.00px;top:496.11px;font-size:23.30px;color:#555;transform:translateX(-50%) scaleX(0.9689);transform-origin:50% 50%;">1,456</div>
<div class="t" id="r0ts" style="left:1503.00px;top:496.11px;font-size:23.30px;color:#555;transform:scaleX(0.9848);">August 22, 2019</div>
<div class="t" id="r0tc" style="left:1811.20px;top:496.11px;font-size:23.30px;color:#555;transform:translateX(-50%) scaleX(0.9582);transform-origin:50% 50%;">23 Days</div>
<div class="t" id="r0y" style="left:1999.40px;top:494.10px;font-size:23.00px;color:#8C8C8C;transform:scaleX(0.8283);letter-spacing:3.00px;">YES</div>
<div class="t" id="r0n" style="left:2106.30px;top:494.10px;font-size:23.00px;color:#8C8C8C;transform:scaleX(0.8880);letter-spacing:3.00px;">NO</div>
<div class="t" id="r1u" style="left:630.40px;top:583.82px;font-size:23.30px;color:#555;transform:scaleX(0.9863);">908-558-0159</div>
<div class="t" id="r1t" style="left:969.60px;top:583.82px;font-size:23.30px;color:#555;transform:scaleX(0.9448);">Erase</div>
<div class="t" id="r1d" style="left:1210.00px;top:583.82px;font-size:23.30px;color:#555;transform:translateX(-50%) scaleX(0.9863);transform-origin:50% 50%;">9</div>
<div class="t" id="r1r" style="left:1377.00px;top:583.82px;font-size:23.30px;color:#555;transform:translateX(-50%) scaleX(0.9689);transform-origin:50% 50%;">7,324</div>
<div class="t" id="r1ts" style="left:1503.00px;top:583.82px;font-size:23.30px;color:#555;transform:scaleX(0.9901);">August 22, 2019</div>
<div class="t" id="r1tc" style="left:1811.20px;top:583.82px;font-size:23.30px;color:#555;transform:translateX(-50%) scaleX(0.9582);transform-origin:50% 50%;">23 Days</div>
<div class="t" id="r1y" style="left:1999.40px;top:581.83px;font-size:23.00px;color:#8C8C8C;transform:scaleX(0.8283);letter-spacing:3.00px;">YES</div>
<div class="t" id="r1n" style="left:2106.30px;top:581.83px;font-size:23.00px;color:#8C8C8C;transform:scaleX(0.8880);letter-spacing:3.00px;">NO</div>
<div class="t" id="r2u" style="left:630.40px;top:671.55px;font-size:23.30px;color:#555;transform:scaleX(1.0654);">cynthia.lindgren@beer.biz</div>
<div class="t" id="r2t" style="left:969.60px;top:671.55px;font-size:23.30px;color:#555;transform:scaleX(1.0074);">Do Not Sell</div>
<div class="t" id="r2d" style="left:1210.00px;top:671.55px;font-size:23.30px;color:#555;transform:translateX(-50%) scaleX(0.9863);transform-origin:50% 50%;">6</div>
<div class="t" id="r2r" style="left:1377.00px;top:671.55px;font-size:23.30px;color:#555;transform:translateX(-50%) scaleX(0.9658);transform-origin:50% 50%;">--</div>
<div class="t" id="r2ts" style="left:1503.00px;top:671.55px;font-size:23.30px;color:#555;transform:scaleX(0.9901);">August 21, 2019</div>
<div class="t" id="r2tc" style="left:1811.20px;top:671.55px;font-size:23.30px;color:#555;transform:translateX(-50%) scaleX(0.9582);transform-origin:50% 50%;">21 Days</div>
<div class="t" id="r2s" style="left:1979.70px;top:669.55px;font-size:23.30px;color:#5E5E5E;transform:scaleX(1.0067);">Select Status</div>
<div class="t" id="r3u" style="left:630.40px;top:759.27px;font-size:23.30px;color:#555;transform:scaleX(1.0517);">ricardo.roberts@yahoo.com</div>
<div class="t" id="r3t" style="left:969.60px;top:759.27px;font-size:23.30px;color:#555;transform:scaleX(1.0074);">Do Not Sell</div>
<div class="t" id="r3d" style="left:1210.00px;top:759.27px;font-size:23.30px;color:#555;transform:translateX(-50%) scaleX(0.9863);transform-origin:50% 50%;">9</div>
<div class="t" id="r3r" style="left:1377.00px;top:759.27px;font-size:23.30px;color:#555;transform:translateX(-50%) scaleX(0.9658);transform-origin:50% 50%;">--</div>
<div class="t" id="r3ts" style="left:1503.00px;top:759.27px;font-size:23.30px;color:#555;transform:scaleX(0.9930);">August 20, 2019</div>
<div class="t" id="r3tc" style="left:1811.20px;top:759.27px;font-size:23.30px;color:#555;transform:translateX(-50%) scaleX(0.9582);transform-origin:50% 50%;">20 Days</div>
<div class="t" id="r3s" style="left:1979.70px;top:757.27px;font-size:23.30px;color:#5E5E5E;transform:scaleX(1.0067);">Select Status</div>
<div class="t" id="r4u" style="left:630.40px;top:846.98px;font-size:23.30px;color:#555;transform:scaleX(0.9925);">021-844-2589</div>
<div class="t" id="r4t" style="left:969.60px;top:846.98px;font-size:23.30px;color:#555;transform:scaleX(0.9448);">Erase</div>
<div class="t" id="r4d" style="left:1210.00px;top:846.98px;font-size:23.30px;color:#555;transform:translateX(-50%) scaleX(0.9259);transform-origin:50% 50%;">10</div>
<div class="t" id="r4r" style="left:1377.00px;top:846.98px;font-size:23.30px;color:#555;transform:translateX(-50%) scaleX(1.0497);transform-origin:50% 50%;">n/a</div>
<div class="t" id="r4ts" style="left:1503.00px;top:846.98px;font-size:23.30px;color:#555;transform:scaleX(0.9930);">August 20, 2019</div>
<div class="t" id="r4tc" style="left:1811.20px;top:846.98px;font-size:23.30px;color:#555;transform:translateX(-50%) scaleX(0.9582);transform-origin:50% 50%;">20 Days</div>
<div class="t" id="r4s" style="left:1979.70px;top:844.98px;font-size:23.30px;color:#5E5E5E;transform:scaleX(1.0067);">Select Status</div>
<div class="t" id="r5u" style="left:630.40px;top:934.71px;font-size:23.30px;color:#555;transform:scaleX(1.0484);">jayce_bogisich@bradtke.biz</div>
<div class="t" id="r5t" style="left:969.60px;top:934.71px;font-size:23.30px;color:#555;transform:scaleX(0.8823);">DSR</div>
<div class="t" id="r5d" style="left:1210.00px;top:934.71px;font-size:23.30px;color:#555;transform:translateX(-50%) scaleX(0.9922);transform-origin:50% 50%;">11</div>
<div class="t" id="r5r" style="left:1377.00px;top:934.71px;font-size:23.30px;color:#555;transform:translateX(-50%) scaleX(1.0497);transform-origin:50% 50%;">n/a</div>
<div class="t" id="r5ts" style="left:1503.00px;top:934.71px;font-size:23.30px;color:#555;transform:scaleX(0.9930);">August 20, 2019</div>
<div class="t" id="r5tc" style="left:1811.20px;top:934.71px;font-size:23.30px;color:#555;transform:translateX(-50%) scaleX(0.9582);transform-origin:50% 50%;">20 Days</div>
<div class="t" id="r5s" style="left:1979.70px;top:932.71px;font-size:23.30px;color:#5E5E5E;transform:scaleX(1.0067);">Select Status</div>
<div class="t" id="r6u" style="left:630.40px;top:1022.44px;font-size:23.30px;color:#555;transform:scaleX(0.9863);">949-657-2589</div>
<div class="t" id="r6t" style="left:969.60px;top:1022.44px;font-size:23.30px;color:#555;transform:scaleX(0.9448);">Erase</div>
<div class="t" id="r6d" style="left:1210.00px;top:1022.44px;font-size:23.30px;color:#555;transform:translateX(-50%) scaleX(0.9259);transform-origin:50% 50%;">12</div>
<div class="t" id="r6r" style="left:1377.00px;top:1022.44px;font-size:23.30px;color:#555;transform:translateX(-50%) scaleX(0.9723);transform-origin:50% 50%;">9,254</div>
<div class="t" id="r6ts" style="left:1503.00px;top:1022.44px;font-size:23.30px;color:#555;transform:scaleX(0.9930);">August 20, 2019</div>
<div class="t" id="r6tc" style="left:1811.20px;top:1022.44px;font-size:23.30px;color:#555;transform:translateX(-50%) scaleX(0.9582);transform-origin:50% 50%;">20 Days</div>
<div class="t" id="r6y" style="left:1999.40px;top:1020.43px;font-size:23.00px;color:#8C8C8C;transform:scaleX(0.8283);letter-spacing:3.00px;">YES</div>
<div class="t" id="r6n" style="left:2106.30px;top:1020.43px;font-size:23.00px;color:#8C8C8C;transform:scaleX(0.8880);letter-spacing:3.00px;">NO</div>
<div class="t" id="r7u" style="left:630.40px;top:1110.15px;font-size:23.30px;color:#555;transform:scaleX(1.0502);">brando_wyman@yahoo.com</div>
<div class="t" id="r7t" style="left:969.60px;top:1110.15px;font-size:23.30px;color:#555;transform:scaleX(0.8823);">DSR</div>
<div class="t" id="r7d" style="left:1210.00px;top:1110.15px;font-size:23.30px;color:#555;transform:translateX(-50%) scaleX(0.9863);transform-origin:50% 50%;">9</div>
<div class="t" id="r7r" style="left:1377.00px;top:1110.15px;font-size:23.30px;color:#555;transform:translateX(-50%) scaleX(0.9822);transform-origin:50% 50%;">24,574</div>
<div class="t" id="r7ts" style="left:1503.00px;top:1110.15px;font-size:23.30px;color:#555;transform:scaleX(0.9930);">August 20, 2019</div>
<div class="t" id="r7tc" style="left:1811.20px;top:1110.15px;font-size:23.30px;color:#555;transform:translateX(-50%) scaleX(0.9582);transform-origin:50% 50%;">20 Days</div>
<div class="t" id="r7y" style="left:1999.40px;top:1108.15px;font-size:23.00px;color:#8C8C8C;transform:scaleX(0.8283);letter-spacing:3.00px;">YES</div>
<div class="t" id="r7n" style="left:2106.30px;top:1108.15px;font-size:23.00px;color:#8C8C8C;transform:scaleX(0.8880);letter-spacing:3.00px;">NO</div>
<div class="t" id="r8u" style="left:630.40px;top:1197.87px;font-size:23.30px;color:#555;transform:scaleX(0.9863);">141-231-9406</div>
<div class="t" id="r8t" style="left:969.60px;top:1197.87px;font-size:23.30px;color:#555;transform:scaleX(1.0074);">Do Not Sell</div>
<div class="t" id="r8d" style="left:1210.00px;top:1197.87px;font-size:23.30px;color:#555;transform:translateX(-50%) scaleX(1.0497);transform-origin:50% 50%;">n/a</div>
<div class="t" id="r8r" style="left:1377.00px;top:1197.87px;font-size:23.30px;color:#555;transform:translateX(-50%) scaleX(1.0497);transform-origin:50% 50%;">n/a</div>
<div class="t" id="r8ts" style="left:1503.00px;top:1197.87px;font-size:23.30px;color:#555;transform:scaleX(0.9930);">August 19, 2019</div>
<div class="t" id="r8tc" style="left:1811.20px;top:1197.87px;font-size:23.30px;color:#555;transform:translateX(-50%) scaleX(0.9582);transform-origin:50% 50%;">19 Days</div>
<div class="t" id="r8s" style="left:1979.70px;top:1195.87px;font-size:23.30px;color:#5E5E5E;transform:scaleX(1.0067);">Select Status</div>
<div class="t" id="r9u" style="left:630.40px;top:1285.58px;font-size:23.30px;color:#555;transform:scaleX(0.9863);">292-946-8032</div>
<div class="t" id="r9t" style="left:969.60px;top:1285.58px;font-size:23.30px;color:#555;transform:scaleX(0.9448);">Erase</div>
<div class="t" id="r9d" style="left:1210.00px;top:1285.58px;font-size:23.30px;color:#555;transform:translateX(-50%) scaleX(0.9259);transform-origin:50% 50%;">14</div>
<div class="t" id="r9r" style="left:1377.00px;top:1285.58px;font-size:23.30px;color:#555;transform:translateX(-50%) scaleX(0.9723);transform-origin:50% 50%;">1,298</div>
<div class="t" id="r9ts" style="left:1503.00px;top:1285.58px;font-size:23.30px;color:#555;transform:scaleX(0.9930);">August 19, 2019</div>
<div class="t" id="r9tc" style="left:1811.20px;top:1285.58px;font-size:23.30px;color:#555;transform:translateX(-50%) scaleX(0.9582);transform-origin:50% 50%;">19 Days</div>
<div class="t" id="ddP" style="left:1979.20px;top:1269.71px;font-size:23.30px;color:#222;transform:scaleX(1.0325);">Processing</div>
<div class="t" id="ddR" style="left:1979.20px;top:1323.31px;font-size:23.30px;color:#222;transform:scaleX(1.0201);">Rejected</div>
<div class="t" id="pRows" style="left:1651.50px;top:1382.01px;font-size:23.30px;color:#555;transform:scaleX(1.0135);">Rows per page: 10</div>
<div class="t" id="pOf" style="left:1964.20px;top:1382.01px;font-size:23.30px;color:#555;transform:scaleX(1.0019);">1-10 of 100</div>
<svg style="position:absolute;left:900px;top:300px" width="45" height="55" viewBox="900 300 45 55"><path d="M923 331.2 L923 318.8 A2 2 0 0 1 927 318.8 L927 323 Q929.5 322.6 931.5 324 Q934 324 935.2 325.6 Q936.8 326.2 936.8 328.5 L936.8 338.5 Q936.2 341.2 934.2 343.2 L934.2 346 L925.4 346 L925.2 343.6 Q923.2 341.5 921.2 337.8 L917.4 330.6 Q916.6 328.6 918.2 327.8 Q920 327 921.4 329 Z" fill="#fff" stroke="#000" stroke-width="2" stroke-linejoin="round"/><rect x="922.8" y="346.4" width="14" height="3.2" rx="1.6" fill="#fff" stroke="#000" stroke-width="2"/><path d="M927.6 322.5 V328.6 M930.9 323.6 V328.6 M934.1 325 V328.6" stroke="#000" stroke-width="1.5"/></svg></body></html>
